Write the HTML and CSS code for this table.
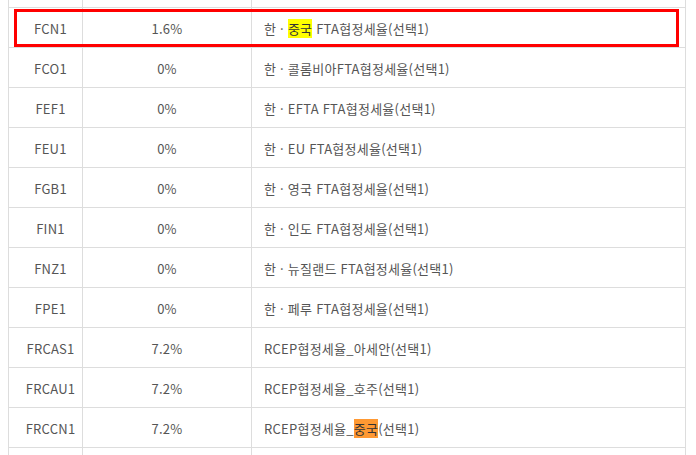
FILE: index.html
```html
<!DOCTYPE html>
<html lang="ko">
<head>
<meta charset="utf-8">
<link rel="stylesheet" href="styles.css">
</head>
<body>
<div class="wrap">
<table class="rates">
  <colgroup><col class="c1"><col class="c2"><col class="c3"></colgroup>
  <tbody>
    <tr class="cut-top"><td></td><td></td><td></td></tr>
    <tr class="marked"><td class="code">FCN1</td><td class="rate">1.6%</td><td class="name">한 · <span class="hl-yellow">중국</span> FTA협정세율(선택1)</td></tr>
    <tr><td class="code">FCO1</td><td class="rate">0%</td><td class="name">한 · 콜롬비아FTA협정세율(선택1)</td></tr>
    <tr><td class="code">FEF1</td><td class="rate">0%</td><td class="name">한 · EFTA FTA협정세율(선택1)</td></tr>
    <tr><td class="code">FEU1</td><td class="rate">0%</td><td class="name">한 · EU FTA협정세율(선택1)</td></tr>
    <tr><td class="code">FGB1</td><td class="rate">0%</td><td class="name">한 · 영국 FTA협정세율(선택1)</td></tr>
    <tr><td class="code">FIN1</td><td class="rate">0%</td><td class="name">한 · 인도 FTA협정세율(선택1)</td></tr>
    <tr><td class="code">FNZ1</td><td class="rate">0%</td><td class="name">한 · 뉴질랜드 FTA협정세율(선택1)</td></tr>
    <tr><td class="code">FPE1</td><td class="rate">0%</td><td class="name">한 · 페루 FTA협정세율(선택1)</td></tr>
    <tr><td class="code">FRCAS1</td><td class="rate">7.2%</td><td class="name">RCEP협정세율_아세안(선택1)</td></tr>
    <tr><td class="code">FRCAU1</td><td class="rate">7.2%</td><td class="name">RCEP협정세율_호주(선택1)</td></tr>
    <tr><td class="code">FRCCN1</td><td class="rate">7.2%</td><td class="name">RCEP협정세율_<span class="hl-orange">중국</span>(선택1)</td></tr>
    <tr class="cut-bottom"><td></td><td></td><td></td></tr>
  </tbody>
</table>
<div class="mark-box"></div>
</div>
</body>
</html>
```
FILE: styles.css
```css
html, body {
  margin: 0;
  padding: 0;
  background: #ffffff;
}
body {
  font-family: "Noto Sans CJK KR", "Noto Sans", sans-serif;
  font-size: 13px;
  color: #555555;
  overflow: hidden;
}
.wrap {
  position: relative;
  padding-left: 8px;
}
.rates {
  border-collapse: collapse;
  table-layout: fixed;
  width: 677px;
}
.c1 { width: 74px; }
.c2 { width: 169px; }
.c3 { width: 434px; }
.rates td {
  border: 1px solid #dddddd;
  height: 40px;
  padding: 0;
  box-sizing: border-box;
  vertical-align: middle;
  line-height: 18px;
  letter-spacing: 0.25px;
}
.rates tr.cut-top td {
  border-top: none;
  height: 7px;
}
.rates tr.cut-bottom td {
  border-bottom: none;
  height: 20px;
}
.rates td.code {
  text-align: center;
  padding-left: 10px;
  padding-top: 3px;
}
.rates td.rate {
  text-align: center;
  padding-top: 3px;
}
.rates td.name {
  padding-left: 12px;
  padding-top: 3px;
}
.hl-yellow { background: #ffff00; color: #333333; }
.hl-orange { background: #ff9933; color: #333333; }
.mark-box {
  position: absolute;
  left: 14px;
  top: 9px;
  width: 665px;
  height: 38px;
  box-sizing: border-box;
  border: 3px solid #ff0000;
}
```
